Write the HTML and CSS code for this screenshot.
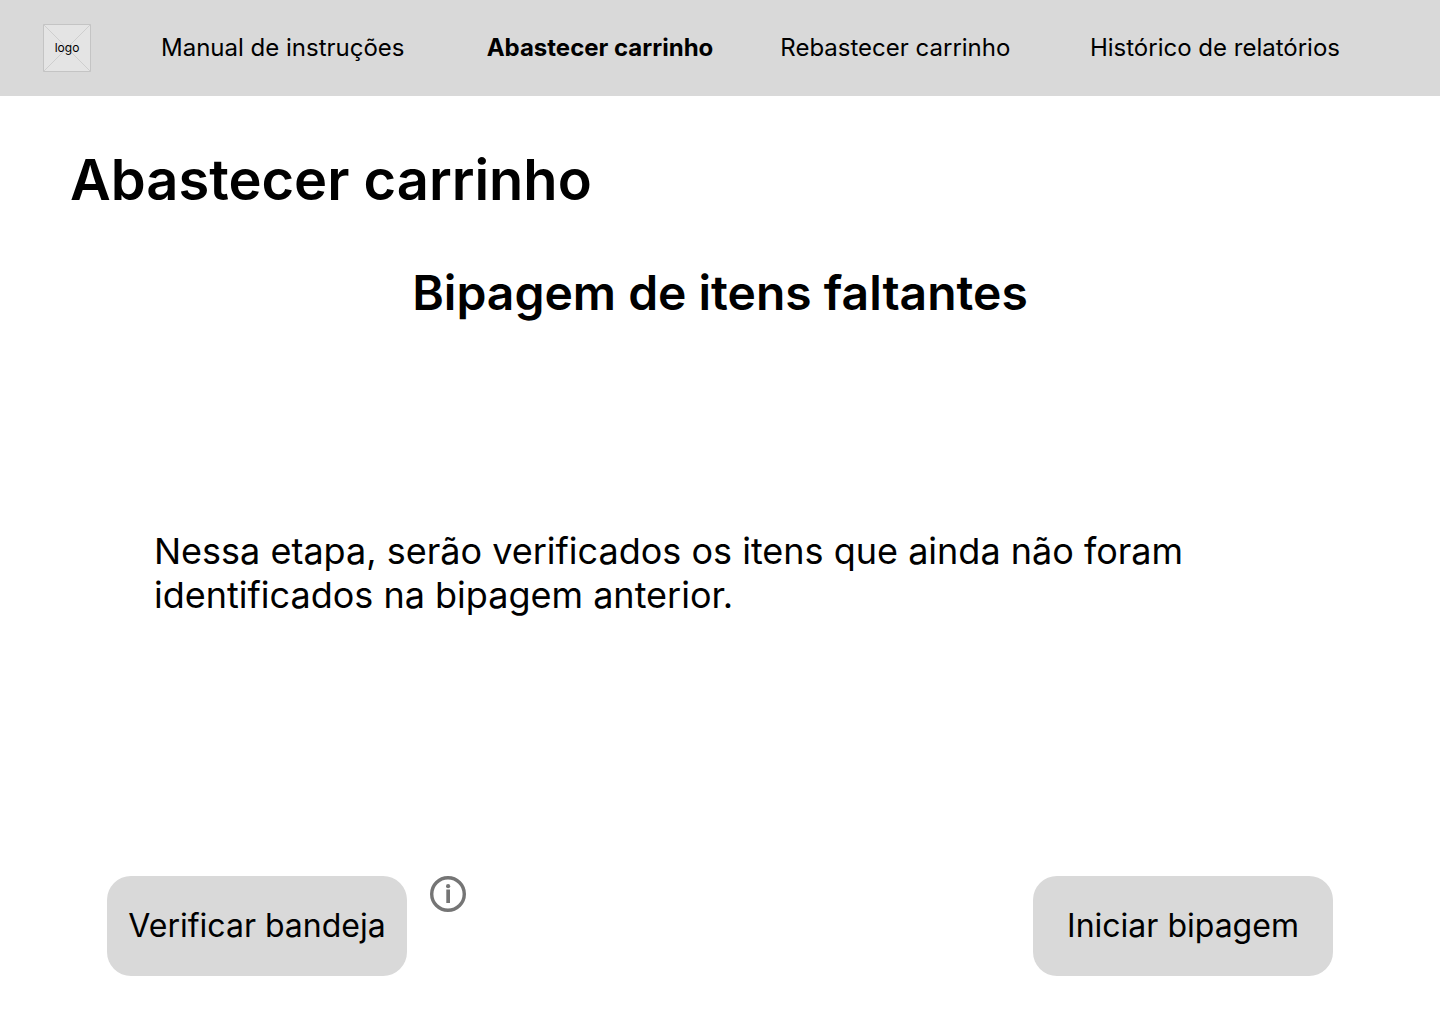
FILE: index.html
```html
<!DOCTYPE html>
<html lang="pt-BR">
<head>
<meta charset="utf-8">
<meta name="viewport" content="width=device-width, initial-scale=1">
<title>Abastecer carrinho</title>
<link rel="stylesheet" href="styles.css">
</head>
<body>
<header class="topbar">
  <a class="logo" href="#">
    <svg class="logo-art" viewBox="0 0 48 48" aria-hidden="true"><path d="M.5.5h47v47H.5z" fill="#e4e4e4" stroke="#c4c4c4"/><path d="M0 0 48 48M48 0 0 48" stroke="#c8c8c8" stroke-width=".8"/></svg>
    <span class="logo-text">logo</span>
  </a>
  <nav class="menu">
    <a class="menu-link" href="#">Manual de instruções</a>
    <a class="menu-link menu-link-active" href="#" aria-current="page">Abastecer carrinho</a>
    <a class="menu-link" href="#">Rebastecer carrinho</a>
    <a class="menu-link" href="#">Histórico de relatórios</a>
  </nav>
</header>
<main class="page">
  <h1 class="title">Abastecer carrinho</h1>
  <h2 class="subtitle">Bipagem de itens faltantes</h2>
  <p class="message">Nessa etapa, serão verificados os itens que ainda não foram identificados na bipagem anterior.</p>
  <div class="actions">
    <div class="check">
      <button class="button" type="button">Verificar bandeja</button>
      <button class="info" type="button" aria-label="Informações">
        <svg class="info-icon" viewBox="0 0 36 36" aria-hidden="true"><circle cx="18" cy="18" r="16.3" fill="none" stroke="#757575" stroke-width="3.4"/><path d="M16.3 13.5h3.7V27h-3.7z" fill="#757575"/><circle cx="18.1" cy="10.2" r="2.1" fill="#757575"/></svg>
      </button>
    </div>
    <button class="button" type="button">Iniciar bipagem</button>
  </div>
</main>
</body>
</html>
```

FILE: styles.css
```css
* { box-sizing: border-box; }

body {
  margin: 0;
  min-height: 100vh;
  display: flex;
  flex-direction: column;
  background: #fff;
  color: #000;
  font-family: Inter, "Liberation Sans", sans-serif;
}

.topbar {
  display: flex;
  align-items: center;
  gap: 70px;
  padding: 24px 100px 24px 43px;
  background: #d9d9d9;
}

.logo {
  display: grid;
  place-items: center;
  flex: none;
  color: inherit;
  text-decoration: none;
}

.logo-art,
.logo-text { grid-area: 1 / 1; }

.logo-art {
  display: block;
  width: 48px;
  height: 48px;
}

.logo-text {
  font-size: 12px;
  line-height: 16px;
}

.menu {
  flex: 1;
  display: grid;
  grid-template-columns: 326fr 294fr 310fr 249fr;
}

.menu-link {
  color: inherit;
  font-size: 24px;
  line-height: 30px;
  text-decoration: none;
  white-space: nowrap;
}

.menu-link-active { font-weight: 700; }

.page {
  flex: 1;
  display: flex;
  flex-direction: column;
  padding: 48px 70px;
}

.title {
  margin: 0;
  font-size: 56px;
  line-height: 72px;
  font-weight: 600;
}

.subtitle {
  margin: 48px 0 0;
  font-size: 48px;
  line-height: 58px;
  font-weight: 600;
  text-align: center;
}

.message {
  max-width: 1080px;
  margin: auto 84px;
  font-size: 36px;
  line-height: 44px;
}

.actions {
  display: flex;
  justify-content: space-between;
  padding: 52px 37px 0;
}

.check {
  display: flex;
  align-items: flex-start;
  gap: 23px;
}

.button {
  width: 300px;
  height: 100px;
  padding: 0;
  border: 0;
  border-radius: 24px;
  background: #d9d9d9;
  color: inherit;
  font: 32px/40px Inter, "Liberation Sans", sans-serif;
}

.info {
  padding: 0;
  border: 0;
  background: none;
}

.info-icon {
  display: block;
  width: 36px;
  height: 36px;
}
```
